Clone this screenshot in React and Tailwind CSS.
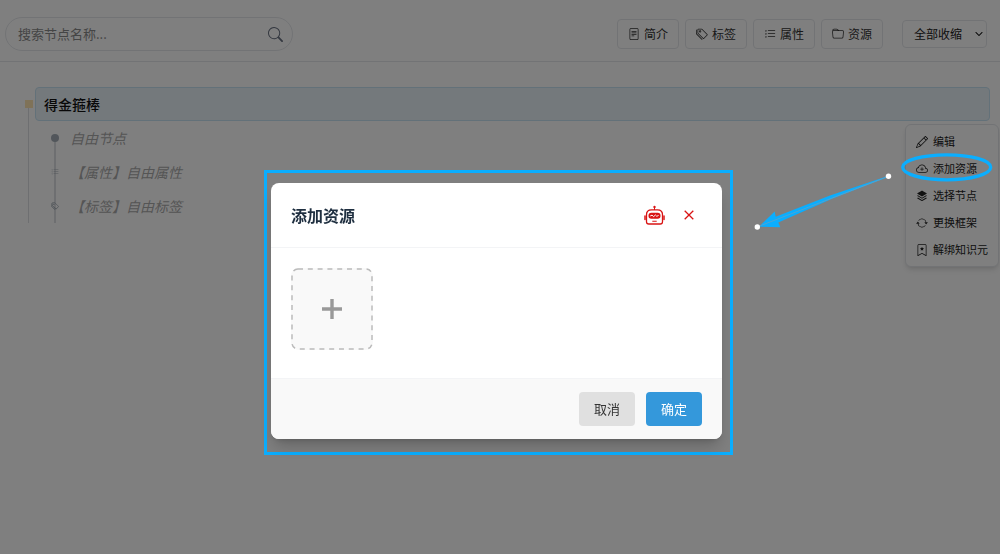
import React, { useState } from 'react';
import {
  BsSearch,
  BsFileText,
  BsTags,
  BsListTask,
  BsFolder,
  BsChevronDown,
  BsPencil,
  BsCloudPlus,
  BsArrowRepeat,
  BsBookmarkStar,
} from 'react-icons/bs';
import { RiStackFill } from 'react-icons/ri';

const toolbarButtons = [
  { label: '简介', icon: BsFileText },
  { label: '标签', icon: BsTags },
  { label: '属性', icon: BsListTask },
  { label: '资源', icon: BsFolder },
];

const menuItems = [
  { label: '编辑', icon: BsPencil },
  { label: '添加资源', icon: BsCloudPlus },
  { label: '选择节点', icon: RiStackFill },
  { label: '更换框架', icon: BsArrowRepeat },
  { label: '解绑知识元', icon: BsBookmarkStar },
];

const childNodes = [
  { label: '自由节点', marker: 'dot' },
  { label: '【属性】自由属性', marker: 'list' },
  { label: '【标签】自由标签', marker: 'tag' },
];

function NodeMarker({ type }) {
  if (type === 'list') return <BsListTask className="w-2 h-2 text-[#a8b0b8]" />;
  if (type === 'tag') return <BsTags className="w-2 h-2 text-[#8f99a3]" />;
  return <span className="w-2 h-2 rounded-full bg-[#a4adb6]" />;
}

function RobotIcon() {
  return (
    <svg viewBox="0 0 21 20" className="w-[21px] h-5" fill="none" stroke="currentColor">
      <circle cx="10.5" cy="2" r="1.2" fill="currentColor" stroke="none" />
      <path d="M10.5 2v3" strokeWidth="1" />
      <path d="M7.5 4.800h6c3 0 5 2 5 4.900v7c0 1.500-.9 2.300-2.300 2.300H4.800c-1.400 0-2.300-.8-2.300-2.300v-7c0-2.900 2-4.900 5-4.900z" strokeWidth="1.3" />
      <path d="M1 11v3.500M20 11v3.500" strokeWidth="1.5" strokeLinecap="round" />
      <rect x="4.500" y="7.800" width="12" height="6" rx="2.800" fill="currentColor" stroke="none" />
      <path d="M6.200 11l1.800-.8 1.700 1.400 1.700-1.600 1.400 1.300 1.800-.9" stroke="#fff" strokeWidth="1" />
      <path d="M8.300 16.200h4.400" strokeWidth="1.1" />
    </svg>
  );
}

function CloseIcon() {
  return (
    <svg viewBox="0 0 10 10" className="w-[10px] h-[10px]" fill="none" stroke="currentColor" strokeWidth="1.3">
      <path d="M.7.7l8.600 8.600M9.300.7L.7 9.300" />
    </svg>
  );
}

function PlusIcon() {
  return (
    <svg viewBox="0 0 20 20" className="w-5 h-5" fill="none" stroke="currentColor" strokeWidth="3.4">
      <path d="M10 0v20M0 10h20" />
    </svg>
  );
}

function Toolbar() {
  const [keyword, setKeyword] = useState('');

  return (
    <header className="flex items-center justify-between h-[62px] pt-[6px] pl-[5px] pr-[13px] border-b border-gray-200">
      <div className="relative w-72">
        <input
          type="text"
          aria-label="搜索节点名称"
          value={keyword}
          onChange={(e) => setKeyword(e.target.value)}
          className="w-full h-[34px] pl-3 pr-9 rounded-full border border-gray-200 text-[13px] placeholder:text-[#8a8a8a] focus:outline-none"
          placeholder="搜索节点名称..."
        />
        <BsSearch className="absolute right-[10px] top-[10px] w-[15px] h-[15px] text-gray-500" />
      </div>

      <div className="flex items-center">
        <div className="flex gap-[6px]">
          {toolbarButtons.map(({ label, icon: Icon }) => (
            <button
              key={label}
              type="button"
              className="flex items-center gap-1 h-[30px] px-[10px] border border-gray-200 rounded text-[12px] text-[#333]"
            >
              <Icon className="w-3 h-3" />
              {label}
            </button>
          ))}
        </div>
        <div className="relative ml-[19px]">
          <select
            aria-label="展开层级"
            className="appearance-none w-[85px] h-7 pl-[11px] border border-gray-200 rounded text-[12px] text-[#222]"
          >
            <option>全部收缩</option>
            <option>全部展开</option>
          </select>
          <BsChevronDown className="absolute right-1 top-[10px] w-2 h-2 stroke-1 text-black pointer-events-none" />
        </div>
      </div>
    </header>
  );
}

function ContextMenu() {
  return (
    <ul className="absolute top-[37px] -right-[9px] px-[10px] py-[3px] bg-white border border-gray-200 rounded-md shadow-md">
      {menuItems.map(({ label, icon: Icon }) => (
        <li key={label}>
          <button type="button" className="flex items-center gap-[5px] h-[27px] text-[11px] text-[#222] whitespace-nowrap">
            <Icon className="w-3 h-3" />
            {label}
          </button>
        </li>
      ))}
    </ul>
  );
}

function NodeTree() {
  return (
    <main className="pt-[25px] pl-[25px] pr-[10px]">
      <div className="relative flex items-center gap-[2px]">
        <span className="w-2 h-2 bg-[#ffe4b0]" />
        <span className="absolute left-[3px] top-[21px] bottom-0 w-px bg-[#dcdfe3]" />
        <div className="flex-1 flex items-center h-[34px] px-2 bg-[#e8f3f9] border border-[#c6e2f3] rounded text-[14px] font-medium text-[#111]">
          得金箍棒
        </div>
        <ContextMenu />
      </div>
      <div className="ml-[3px] pl-[22px] border-l border-[#dcdfe3]">
        <ul className="flex flex-col">
          {childNodes.map(({ label, marker }) => (
            <li key={label} className="group relative flex items-center gap-[11px] h-[34px] text-[14px] italic text-[#aaa]">
              <span className="relative z-10 flex w-2 justify-center">
                <NodeMarker type={marker} />
              </span>
              <span className="absolute left-[3px] top-0 group-first:top-4 bottom-0 w-[2px] bg-[#dcdfe3]" />
              {label}
            </li>
          ))}
        </ul>
      </div>
    </main>
  );
}

function AddResourceModal() {
  return (
    <div className="border-[3px] border-[#0aaeff] pt-[10px] pr-2 pb-[13px] pl-1">
      <div role="dialog" aria-label="添加资源" className="w-[451px] bg-white rounded-lg shadow-lg shadow-black/20 overflow-hidden">
        <div className="flex items-center justify-between h-[65px] pl-5 pr-7 border-b border-gray-100">
          <h2 className="text-[16px] font-bold text-[#1f2f40]">添加资源</h2>
          <div className="flex items-center gap-[19px] text-[#d91414]">
            <button type="button" aria-label="智能助手">
              <RobotIcon />
            </button>
            <button type="button" aria-label="关闭">
              <CloseIcon />
            </button>
          </div>
        </div>

        <div className="px-5 pt-5 pb-7">
          <button
            type="button"
            aria-label="添加"
            className="relative flex items-center justify-center w-[82px] h-[82px] rounded-lg bg-[#f9f9f9] text-[#999]"
          >
            <svg className="absolute inset-0 w-full h-full" viewBox="0 0 82 82" fill="none">
              <rect x="1" y="1" width="80" height="80" rx="6" stroke="#bbb" strokeWidth="1.5" strokeDasharray="5 4.8" />
            </svg>
            <PlusIcon />
          </button>
        </div>

        <div className="flex justify-end gap-[11px] px-5 py-[13px] bg-[#f9f9f9] border-t border-gray-100">
          <button type="button" className="h-[34px] px-[15px] rounded bg-[#e0e0e0] text-[13px] text-[#333]">
            取消
          </button>
          <button type="button" className="h-[34px] px-[15px] rounded bg-[#3498db] text-[13px] text-white">
            确定
          </button>
        </div>
      </div>
    </div>
  );
}

// Circles the menu entry and points at the dialog it opens
function Callout() {
  return (
    <svg viewBox="0 0 260 250" className="absolute right-0 top-0 w-[260px] h-[250px] pointer-events-none" fill="none">
      <ellipse cx="206.7" cy="167.3" rx="44" ry="12.5" stroke="#0aaeff" strokeWidth="3.3" />
      <path d="M148 175.900L90 195.500L35.700 216.800L34.700 211.500L19 226.700L40.300 227.300L38.300 222.500L92 198.800L148 176.900Z" fill="#0aaeff" />
      <path d="M17 227L148.500 176.300" stroke="#6f9fbd" strokeWidth="0.7" />
      <circle cx="17.3" cy="227" r="2.7" fill="#fff" />
      <circle cx="148.500" cy="176.300" r="2.700" fill="#fff" />
    </svg>
  );
}

export default function App() {
  return (
    <div className="min-h-screen bg-white font-['Noto_Sans_CJK_SC','Noto_Sans',sans-serif]">
      <Toolbar />
      <NodeTree />
      <div className="fixed inset-0 z-50 flex items-center justify-center pt-[71px] pr-[3px] bg-black/50">
        <AddResourceModal />
        <Callout />
      </div>
    </div>
  );
}
